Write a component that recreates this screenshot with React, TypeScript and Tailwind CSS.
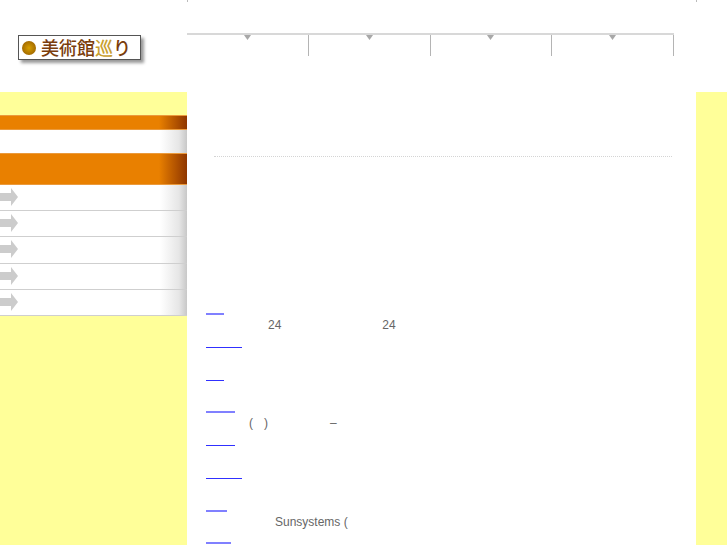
const font = { fontFamily: '"Liberation Sans", Arial, sans-serif' };

const NAV = [0, 1, 2, 3];
const SIDE = [0, 1, 2, 3, 4];

function Arrow() {
  return (
    <svg width="19" height="18" viewBox="0 0 19 18" className="shrink-0 mb-[1px]">
      <path d="M0 5h11V0l7 9-7 9v-5H0z" fill="#cccccc" />
    </svg>
  );
}

function OrangeBar({ h }: { h: string }) {
  return (
    <div className={`flex ${h} bg-[#e98000] border-y border-[#eb9a3c]`}>
      <div className="flex-1" />
      <div className="w-[28px] bg-linear-to-r from-[#e98000] to-[#8f3600]" />
    </div>
  );
}

function SideRow() {
  return (
    <div className="flex h-[26.2px] items-center bg-white border-b border-[#cfcfcf]">
      <Arrow />
      <div className="flex-1" />
      <div className="w-[27px] h-full bg-linear-to-r from-white via-[#e6e6e6] via-70% to-[#c8c8c8]" />
    </div>
  );
}

function Sidebar() {
  return (
    <aside className="w-[187px] shrink-0 bg-[#ffff99] pt-[23px]">
      <OrangeBar h="h-[15px]" />
      <div className="flex h-[23px] bg-white">
        <div className="flex-1" />
        <div className="w-[27px] bg-linear-to-r from-white via-[#e6e6e6] via-70% to-[#c8c8c8]" />
      </div>
      <OrangeBar h="h-[32px]" />
      {SIDE.map((i) => (
        <SideRow key={i} />
      ))}
    </aside>
  );
}

function Item({ w, thick, children }: { w: string; thick?: boolean; children?: React.ReactNode }) {
  return (
    <div className="h-[32.75px]">
      <div className={`${w} h-[14px] ${thick ? 'border-b border-[#3030ff]' : 'border-b-2 border-[#8080ff]'}`} />
      <div className="h-[18.75px] pt-[2px] text-[12px] leading-[16px] text-[#666666] whitespace-pre flex">
        {children}
      </div>
    </div>
  );
}

export default function App() {
  return (
    <div className="w-[727px] h-[545px] overflow-hidden bg-white" style={font}>
      <header className="h-[92px] flex">
        <div className="w-[187px] shrink-0 pl-[18px] pt-[35px]">
          <div className="w-[123px] h-[25px] flex items-center gap-[5px] pl-[3px] bg-white border border-[#555555] shadow-[3px_3px_3px_#999999]">
            <span className="w-[14px] h-[14px] rounded-full bg-radial from-[#d8a000] to-[#8f5600] shrink-0" />
            <span className="text-[18px] leading-none font-medium whitespace-nowrap text-[#7a3d0c] -mt-[2px]" style={{ fontFamily: '"Noto Sans CJK JP", sans-serif' }}>
              美術館<span className="text-[#c8a030]">巡</span>り
            </span>
          </div>
        </div>
        <div className="w-[510px]">
          <div className="h-[2px] border-x border-[#bbbbbb]" />
          <nav className="mt-[31px] w-[487px] flex border-t-2 border-[#d8d8d8]">
            {NAV.map((i) => (
              <div key={i} className="flex-1 h-[21px] border-r border-[#b4b4b4] flex justify-center">
                <svg width="7" height="5" viewBox="0 0 7 5">
                  <path d="M0 0h7L3.5 5z" fill="#a8a8a8" />
                </svg>
              </div>
            ))}
          </nav>
        </div>
      </header>
      <div className="flex h-[453px]">
        <Sidebar />
        <main className="w-[509px] shrink-0 bg-white pl-[19px]">
          <div className="ml-[8px] mr-[24px] mt-[64px] border-t border-dotted border-[#d4d4d4]" />
          <div className="mt-[144px]">
            <Item w="w-[18px]">
              <span className="ml-[62px]">24</span>
              <span className="ml-[101px]">24</span>
            </Item>
            <Item w="w-[36px]" thick />
            <Item w="w-[18px]" thick />
            <Item w="w-[29px]">
              <span className="ml-[43px]">(</span>
              <span className="ml-[11px]">)</span>
              <span className="ml-[62px]">–</span>
            </Item>
            <Item w="w-[29px]" thick />
            <Item w="w-[36px]" thick />
            <Item w="w-[21px]">
              <span className="ml-[69px]">Sunsystems (</span>
            </Item>
            <Item w="w-[25px]" />
          </div>
        </main>
        <div className="flex-1 bg-[#ffff99]" />
      </div>
    </div>
  );
}
